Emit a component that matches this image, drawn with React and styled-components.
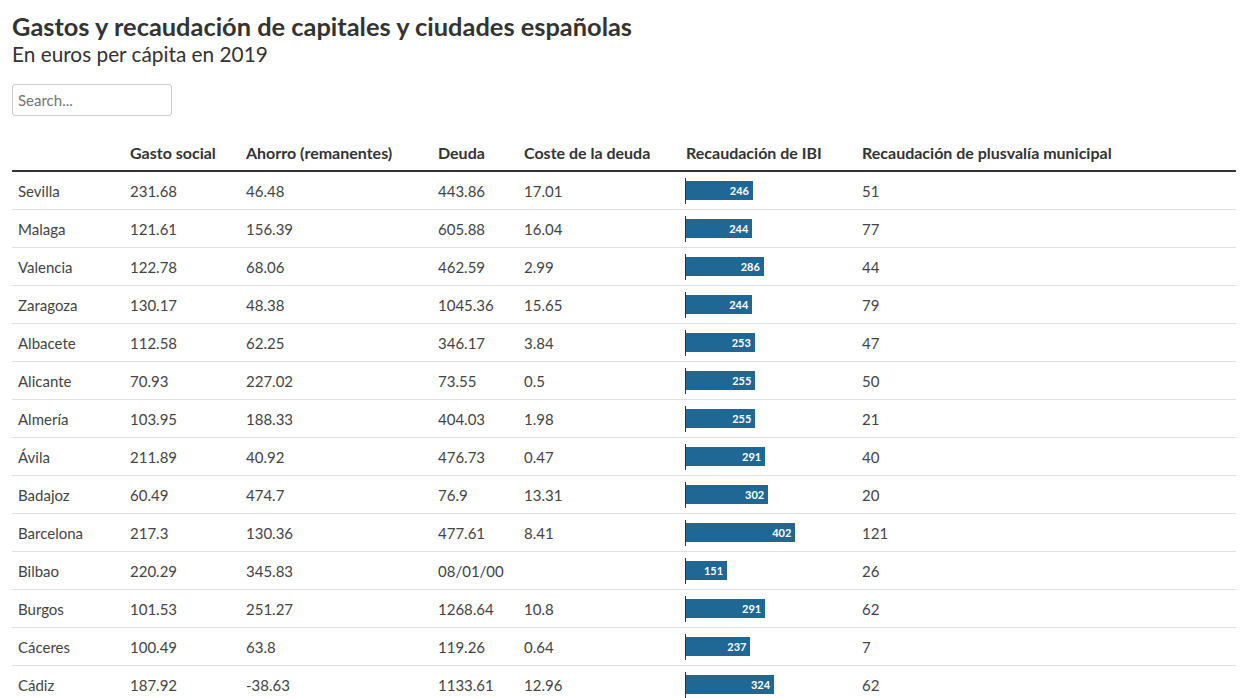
import styled, { createGlobalStyle } from 'styled-components';

const GlobalStyle = createGlobalStyle`
    html, body {
        margin: 0;
        padding: 0;
        overflow: hidden;
        background: #fff;
    }
    body {
        font-family: "Source Sans Pro", Lato, "Liberation Sans", sans-serif;
        color: #333;
    }
`;

const Page = styled.div`
    padding: 11px 12px 0 12px;
`;

const Title = styled.h1`
    margin: 0;
    font-size: 25.4px;
    line-height: 30px;
    font-weight: 700;
    color: #333;
`;

const Subtitle = styled.h2`
    margin: 0;
    font-size: 20.8px;
    line-height: 26px;
    font-weight: 400;
    color: #333;
`;

const SearchInput = styled.input`
    display: block;
    margin-top: 17px;
    width: 160px;
    height: 32px;
    box-sizing: border-box;
    border: 1px solid #ccc;
    border-radius: 3px;
    padding: 0 5px;
    font-family: inherit;
    font-size: 15px;
    color: #333;
    outline: none;
    &::placeholder {
        color: #757575;
    }
`;

const Table = styled.table`
    margin-top: 20px;
    width: 100%;
    border-collapse: collapse;
    table-layout: fixed;
    font-size: 15px;
`;

const Th = styled.th`
    height: 35px;
    box-sizing: border-box;
    padding: 0 6px 8px 6px;
    text-align: left;
    vertical-align: bottom;
    font-size: 16px;
    font-weight: 700;
    color: #333;
    border-bottom: 2px solid #333;
    white-space: nowrap;
`;

const Td = styled.td`
    height: 37px;
    padding: 0 6px;
    color: #444;
    border-bottom: 1px solid #e2e2e2;
    white-space: nowrap;
`;

const BarCell = styled.div`
    display: flex;
    align-items: center;
    height: 26px;
    margin-left: -1px;
    border-left: 1px solid #333;
`;

const Bar = styled.div`
    height: 19px;
    background: #1f6794;
    color: #fff;
    font-size: 11px;
    font-weight: 700;
    line-height: 19px;
    text-align: right;
    padding-right: 4px;
    box-sizing: border-box;
`;

const columns = [
    { key: 'city', label: '', width: 112 },
    { key: 'gasto', label: 'Gasto social', width: 116 },
    { key: 'ahorro', label: 'Ahorro (remanentes)', width: 192 },
    { key: 'deuda', label: 'Deuda', width: 86 },
    { key: 'coste', label: 'Coste de la deuda', width: 162 },
    { key: 'ibi', label: 'Recaudación de IBI', width: 176 },
    { key: 'plus', label: 'Recaudación de plusvalía municipal' },
];

const rows = [
    ['Sevilla', '231.68', '46.48', '443.86', '17.01', 246, '51'],
    ['Malaga', '121.61', '156.39', '605.88', '16.04', 244, '77'],
    ['Valencia', '122.78', '68.06', '462.59', '2.99', 286, '44'],
    ['Zaragoza', '130.17', '48.38', '1045.36', '15.65', 244, '79'],
    ['Albacete', '112.58', '62.25', '346.17', '3.84', 253, '47'],
    ['Alicante', '70.93', '227.02', '73.55', '0.5', 255, '50'],
    ['Almería', '103.95', '188.33', '404.03', '1.98', 255, '21'],
    ['Ávila', '211.89', '40.92', '476.73', '0.47', 291, '40'],
    ['Badajoz', '60.49', '474.7', '76.9', '13.31', 302, '20'],
    ['Barcelona', '217.3', '130.36', '477.61', '8.41', 402, '121'],
    ['Bilbao', '220.29', '345.83', '08/01/00', '', 151, '26'],
    ['Burgos', '101.53', '251.27', '1268.64', '10.8', 291, '62'],
    ['Cáceres', '100.49', '63.8', '119.26', '0.64', 237, '7'],
    ['Cádiz', '187.92', '-38.63', '1133.61', '12.96', 324, '62'],
];

const BAR_SCALE = 0.272;

const App = () => {
    return (
        <Page>
            <GlobalStyle />
            <Title>Gastos y recaudación de capitales y ciudades españolas</Title>
            <Subtitle>En euros per cápita en 2019</Subtitle>
            <SearchInput type="text" placeholder="Search..." />
            <Table>
                <colgroup>
                    {columns.map((c) => (
                        <col key={c.key} style={c.width ? { width: c.width } : undefined} />
                    ))}
                </colgroup>
                <thead>
                    <tr>
                        {columns.map((c) => (
                            <Th key={c.key}>{c.label}</Th>
                        ))}
                    </tr>
                </thead>
                <tbody>
                    {rows.map((r) => (
                        <tr key={r[0]}>
                            <Td>{r[0]}</Td>
                            <Td>{r[1]}</Td>
                            <Td>{r[2]}</Td>
                            <Td>{r[3]}</Td>
                            <Td>{r[4]}</Td>
                            <Td>
                                <BarCell>
                                    <Bar style={{ width: r[5] * BAR_SCALE }}>{r[5]}</Bar>
                                </BarCell>
                            </Td>
                            <Td>{r[6]}</Td>
                        </tr>
                    ))}
                </tbody>
            </Table>
        </Page>
    );
};

export default App;
